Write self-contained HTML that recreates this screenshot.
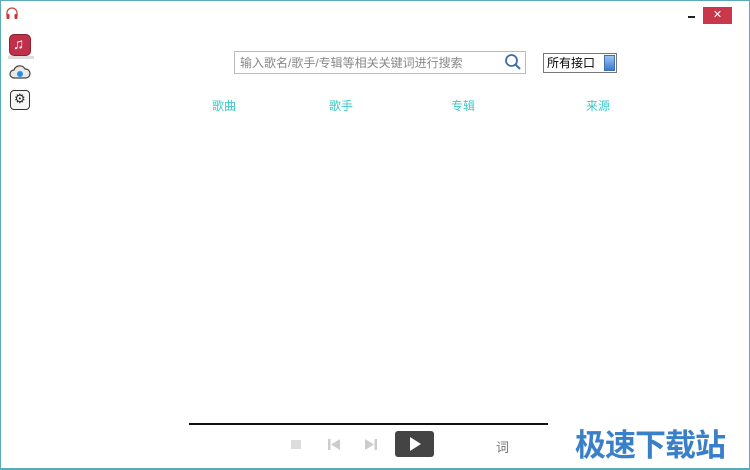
<!DOCTYPE html>
<html><head><meta charset="utf-8"><style>
*{margin:0;padding:0;box-sizing:border-box}
body{width:750px;height:470px;background:#fff;position:relative;overflow:hidden;font-family:"Liberation Sans","Noto Sans CJK SC",sans-serif}
.frame{position:absolute;left:0;top:0;width:750px;height:470px;border:1px solid #5aaab8;border-bottom-width:2px}
.a{position:absolute}
.tab{font-size:12px;color:#3cc8c8}
</style></head><body>
<div class="frame"></div>
<svg class="a" style="left:4px;top:6px" width="16" height="14" viewBox="0 0 16 14"><path d="M3 10V7a5 5 0 0 1 10 0v3" fill="none" stroke="#c44" stroke-width="1.3"/><rect x="2.5" y="8" width="3" height="5" rx="1" fill="#c33"/><rect x="10.5" y="8" width="3" height="5" rx="1" fill="#c33"/></svg>
<div class="a" style="left:9px;top:34px;width:22px;height:22px;background:#c0304a;border-radius:5px;border:1px solid #8a2030"></div>
<div class="a" style="left:8px;top:56px;width:26px;height:3px;background:#ddd"></div>
<div class="a" style="left:13px;top:36px;color:#fff;font-size:15px;line-height:18px">♫</div>
<svg class="a" style="left:9px;top:63px" width="22" height="18" viewBox="0 0 22 18"><path d="M5 15a4 4 0 0 1 0-8a6 6 0 0 1 11-1a4.5 4.5 0 0 1 1 9z" fill="#e8e8e8" stroke="#444" stroke-width="1.2"/><circle cx="11" cy="11" r="3" fill="#2a8ee0"/></svg>
<div class="a" style="left:10px;top:90px;width:20px;height:20px;border:1.5px solid #333;border-radius:4px;background:#f5f5f5"></div>
<div class="a" style="left:14px;top:91px;font-size:13px;color:#222">⚙</div>
<div class="a" style="left:688px;top:16px;width:7px;height:2px;background:#222"></div>
<div class="a" style="left:703px;top:7px;width:29px;height:17px;background:#c8384a;color:#fff;font-size:11px;text-align:center;line-height:17px">✕</div>
<div class="a" style="left:234px;top:51px;width:292px;height:23px;border:1px solid #bbb;background:#fff"></div>
<div class="a" style="left:240px;top:54px;font-size:12px;color:#888">输入歌名/歌手/专辑等相关关键词进行搜索</div>
<svg class="a" style="left:504px;top:53px" width="18" height="18" viewBox="0 0 18 18"><circle cx="7.5" cy="7.5" r="5.5" fill="none" stroke="#3a6ea8" stroke-width="1.8"/><path d="M11.5 11.5L16 16" stroke="#3a6ea8" stroke-width="2"/></svg>
<div class="a" style="left:543px;top:53px;width:74px;height:20px;border:1px solid #777;background:#fff"></div>
<div class="a" style="left:547px;top:54px;font-size:12px;color:#000">所有接口</div>
<div class="a" style="left:604px;top:55px;width:11px;height:16px;background:linear-gradient(#9cc4f0,#3a7ad0);border:1px solid #4070b0"></div>
<div class="a tab" style="left:212px;top:97px">歌曲</div>
<div class="a tab" style="left:329px;top:97px">歌手</div>
<div class="a tab" style="left:451px;top:97px">专辑</div>
<div class="a tab" style="left:586px;top:97px">来源</div>
<div class="a" style="left:189px;top:423px;width:359px;height:2px;background:#111"></div>
<div class="a" style="left:291px;top:440px;width:10px;height:9px;background:#ddd"></div>
<svg class="a" style="left:328px;top:439px" width="12" height="11" viewBox="0 0 12 11"><rect x="0" y="0" width="2.5" height="11" fill="#ccc"/><path d="M12 0L3 5.5L12 11z" fill="#ccc"/></svg>
<svg class="a" style="left:365px;top:439px" width="12" height="11" viewBox="0 0 12 11"><rect x="9.5" y="0" width="2.5" height="11" fill="#ccc"/><path d="M0 0L9 5.5L0 11z" fill="#ccc"/></svg>
<div class="a" style="left:395px;top:431px;width:39px;height:26px;background:#444;border-radius:3px"></div>
<div class="a" style="left:410px;top:437px;width:0;height:0;border-left:11px solid #fff;border-top:7px solid transparent;border-bottom:7px solid transparent"></div>
<div class="a" style="left:496px;top:437px;font-size:13px;color:#777">词</div>
<div class="a" style="left:575px;top:420px;font-size:31px;color:#3a80c8;font-weight:bold;letter-spacing:-1px">极速下载站</div>
</body></html>
